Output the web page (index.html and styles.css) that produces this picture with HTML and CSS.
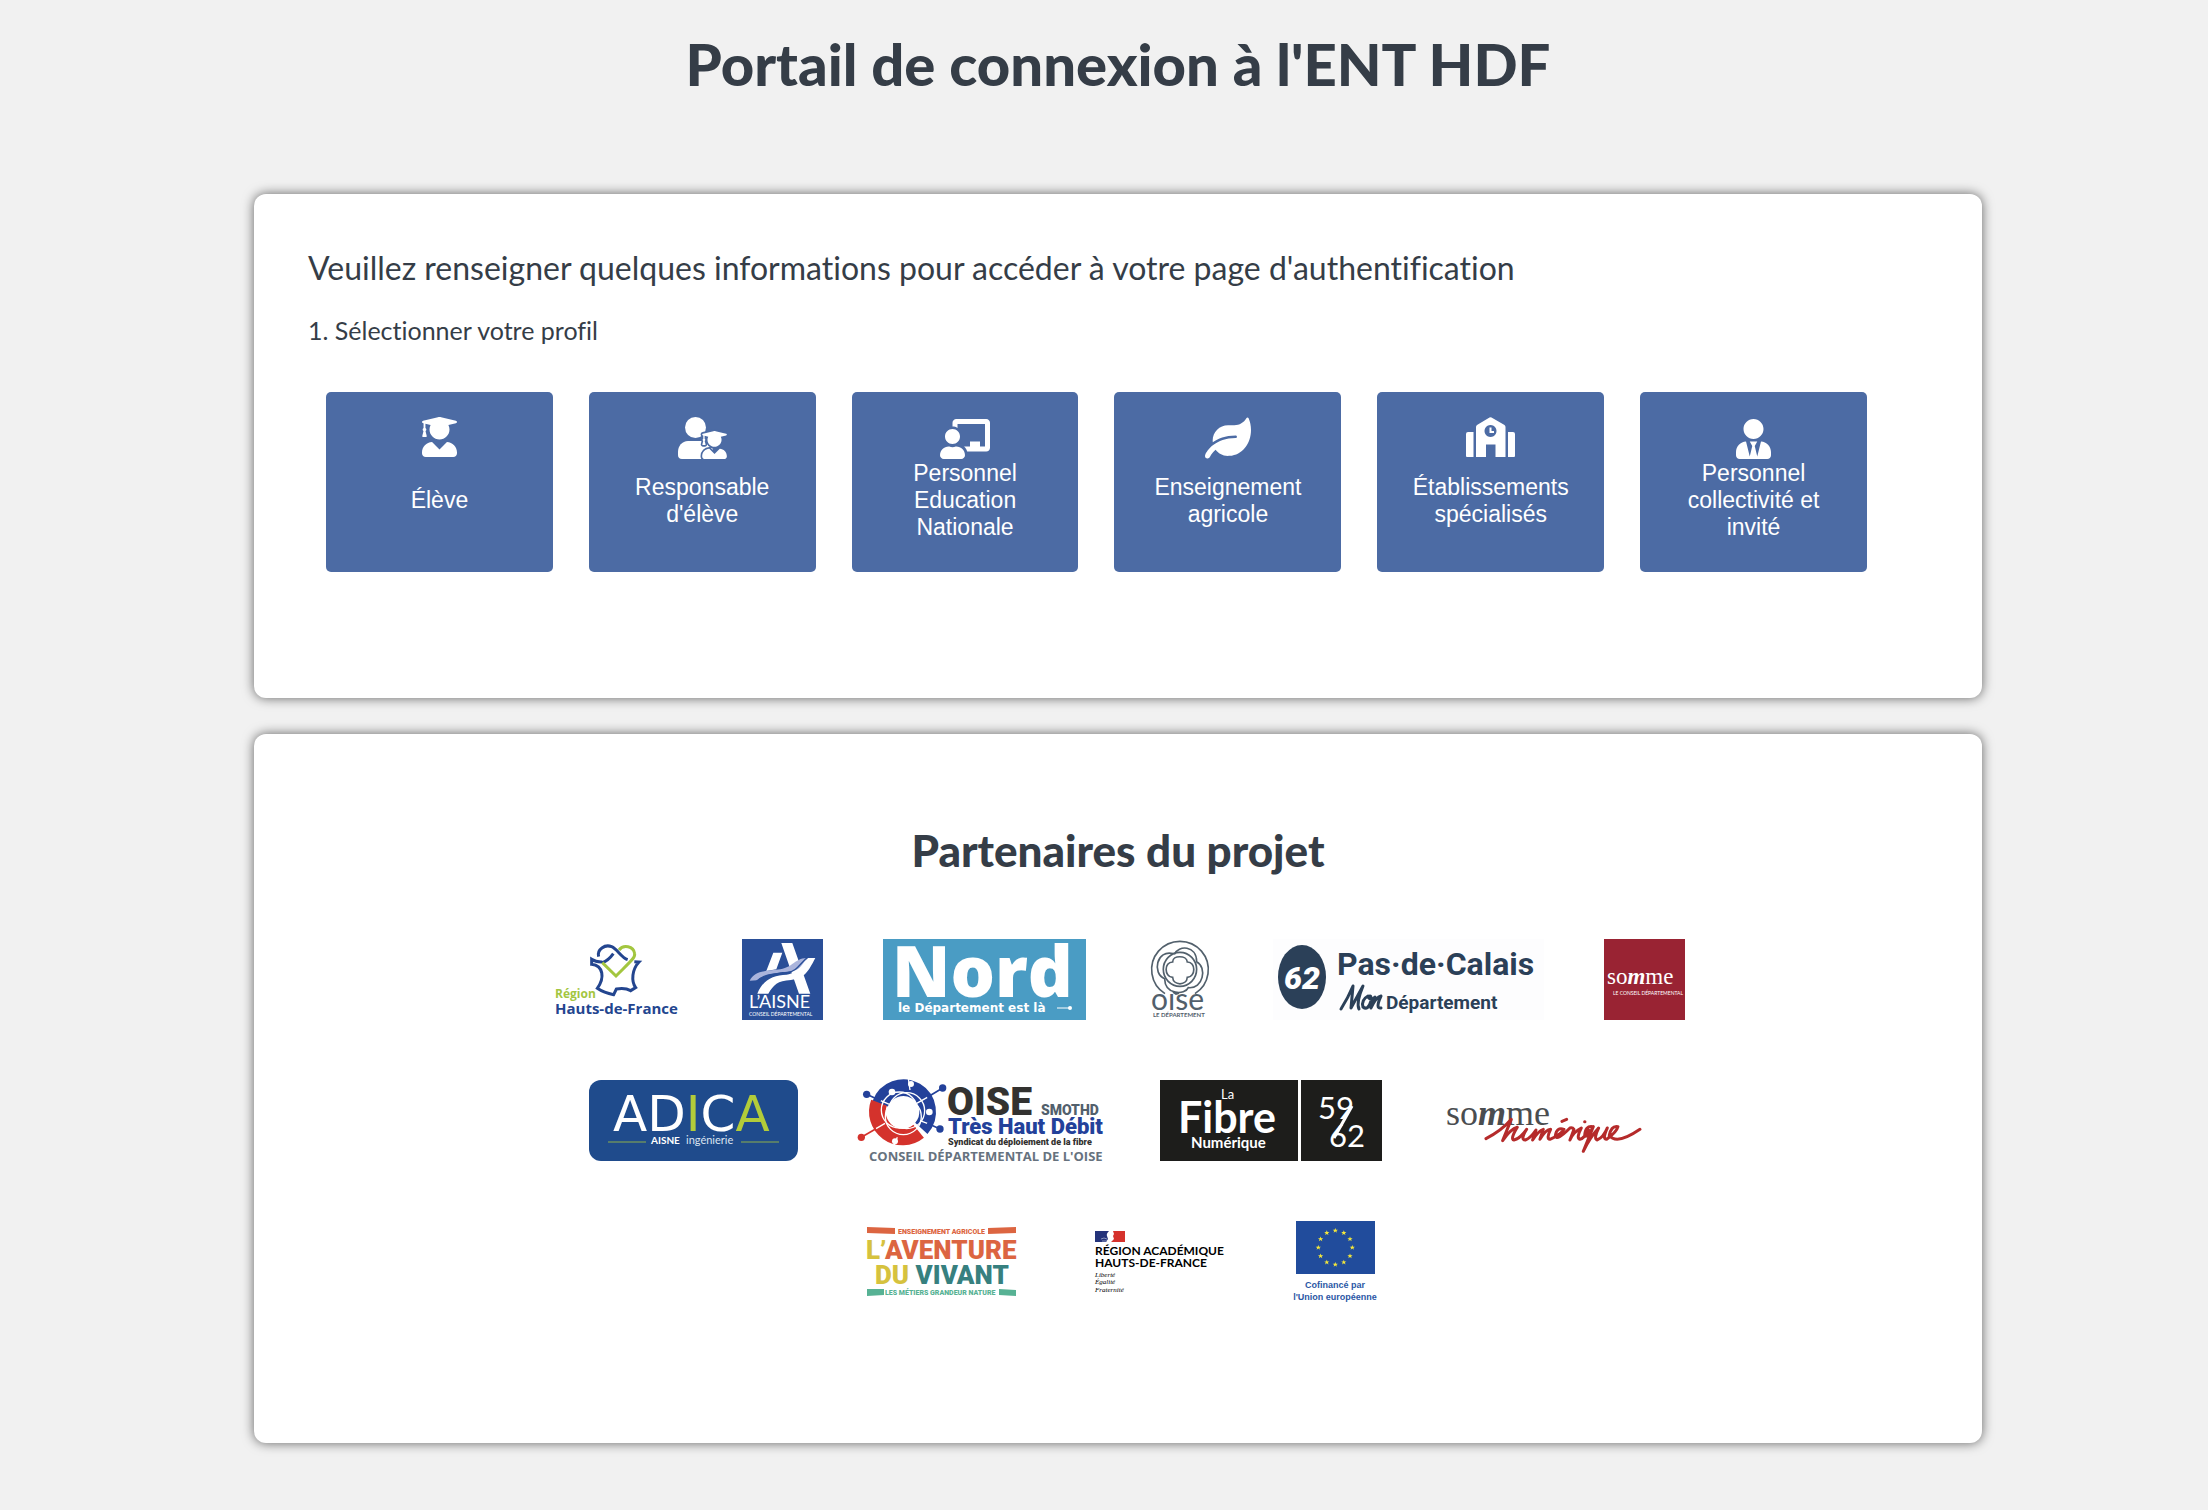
FILE: index.html
```html
<!DOCTYPE html>
<html lang="fr">
  <head>
    <meta charset="UTF-8" />
    <meta name="viewport" content="width=device-width, initial-scale=1.0" />
    <title>Portail de connexion à l'ENT HDF</title>
    <link rel="stylesheet" href="styles.css">
  </head>
  <body>
    <header>
      <h1>Portail de connexion à l'ENT HDF</h1>
    </header>
    <main>
      <section class="card">
        <h2 class="intro">Veuillez renseigner quelques informations pour accéder à votre page d'authentification</h2>
        <p class="etape">1. Sélectionner votre profil</p>
        <div class="profils">
          <button type="button">
            <svg width="35" height="40" viewBox="0 0 448 512"><path id="diplome" d="M319.400 320.600L224 416l-95.400-95.400C57.100 323.700 0 382.200 0 454.400v9.600c0 26.500 21.500 48 48 48h352c26.500 0 48-21.500 48-48v-9.600c0-72.200-57.100-130.700-128.600-133.800zM13.600 79.800l6.400 1.500v58.400c-7 4.200-12 11.500-12 20.300 0 8.400 4.600 15.400 11.100 19.700L3.500 242c-1.700 6.900 2.100 14 7.600 14h41.800c5.500 0 9.300-7.100 7.600-14l-15.600-62.300C51.400 175.400 56 168.400 56 160c0-8.800-5-16.100-12-20.300V87.100l66 15.900c-8.600 17.200-14 36.400-14 57 0 70.700 57.300 128 128 128s128-57.300 128-128c0-20.600-5.300-39.800-14-57l96.300-23.200c18.200-4.400 18.200-27.100 0-31.500l-190.400-46c-13-3.100-26.700-3.100-39.700 0L13.600 48.200c-18.100 4.400-18.100 27.200 0 31.600z"/></svg>
            <span>Élève</span>
          </button>
          <button type="button">
            <svg width="49" height="42" viewBox="0 0 49 42">
              <circle cx="17.500" cy="10.500" r="10.500"/>
              <path d="M10 24h15c5 0 10 5 10 11v7H4c-2.500 0-4-1.500-4-4v-3c0-6 4-11 10-11z"/>
              <g transform="translate(24.200 14) scale(.055)">
                <use href="#diplome" class="contour"/>
                <use href="#diplome"/>
              </g>
            </svg>
            <span>Responsable d'élève</span>
          </button>
          <button type="button" class="long">
            <svg width="50" height="40" viewBox="0 0 640 512"><path d="M208 352c-2.390 0-4.780.35-7.060 1.090C187.980 357.300 174.350 360 160 360c-14.350 0-27.980-2.700-40.950-6.910-2.280-.74-4.660-1.090-7.050-1.090C49.940 352-.33 402.480 0 464.620.14 490.880 21.730 512 48 512h224c26.270 0 47.860-21.120 48-47.380.33-62.140-49.940-112.620-112-112.620zm-48-32c53.020 0 96-42.980 96-96s-42.980-96-96-96-96 42.980-96 96 42.980 96 96 96zM592 0H208c-26.470 0-48 22.250-48 49.590V96c23.420 0 45.100 6.780 64 17.800V64h352v288h-64v-64H384v64h-76.240c19.100 16.690 33.120 38.730 39.690 64H592c26.470 0 48-22.250 48-49.590V49.590C640 22.250 618.470 0 592 0z"/></svg>
            <span>Personnel Education Nationale</span>
          </button>
          <button type="button">
            <svg width="46" height="42" viewBox="0 0 576 512"><path d="M546.200 9.700c-5.600-12.500-21.600-13-28.300-1.200C486.900 62.400 431.400 96 368 96h-80C182 96 96 182 96 288c0 7 .8 13.700 1.500 20.500C161.300 262.800 253.400 224 384 224c8.800 0 16 7.200 16 16s-7.200 16-16 16C132.600 256 26 410.100 2.400 468c-6.600 16.300 1.200 34.900 17.500 41.600 16.400 6.800 35-1.100 41.800-17.300 1.500-3.600 20.900-47.900 71.900-90.600 32.400 43.900 94 85.800 174.900 77.200C465.500 467.500 576 326.700 576 154.300c0-50.200-10.800-102.200-29.800-144.600z"/></svg>
            <span>Enseignement agricole</span>
          </button>
          <button type="button">
            <svg width="49" height="40" viewBox="0 0 49 40">
              <path fill-rule="evenodd" d="M10 40V10q0-1 1-2L23.500.5q1-.6 2 0L38.500 8q1 1 1 2v30h-10V27.500h-9.500V40zM24.500 8a6 6 0 1 0 .01 0z"/>
              <path d="M7.500 15v25H1q-1 0-1-1V17q0-2 2-2zM42 15v25h6q1 0 1-1V17q0-2-2-2zM23.500 10.500h2V14h2.500v2h-4.500z"/>
            </svg>
            <span>Établissements spécialisés</span>
          </button>
          <button type="button" class="long">
            <svg width="35" height="40" viewBox="0 0 448 512"><path d="M224 256c70.700 0 128-57.300 128-128S294.700 0 224 0 96 57.300 96 128s57.300 128 128 128zm95.800 32.600L272 480l-32-136 32-56h-96l32 56-32 136-47.800-191.400C56.900 292 0 350.300 0 422.400V464c0 26.500 21.500 48 48 48h352c26.500 0 48-21.500 48-48v-41.600c0-72.100-56.900-130.400-128.200-133.800z"/></svg>
            <span>Personnel collectivité et invité</span>
          </button>
        </div>
      </section>

      <section class="card partenaires">
        <h2>Partenaires du projet</h2>
        <div class="logos">
          <!-- Région Hauts-de-France -->
          <svg width="131" height="81" class="open">
            <g transform="translate(-11 -19) scale(.3333)" fill="none" stroke-width="9">
              <path stroke="#23458f" d="M187 128Q205 122 220 101M176 110C170 88 195 72 215 80C232 87 243 112 263 119M187 126Q168 127 155 118V133C190 138 195 172 172 205Q192 219 221 224L229 207Q255 202 272 212L287 203C273 184 276 148 297 126L283 125"/>
              <path stroke="#a3c63f" d="M237 90C250 72 281 78 284 101C286 113 272 124 228 168L187 128"/>
            </g>
            <text x="4" y="59" font-size="12" fill="#a3c63f">Région</text>
            <text x="4" y="75" font-size="15" fill="#23458f">Hauts-de-France</text>
          </svg>
          <!-- Aisne -->
          <svg width="81" height="81" class="lato">
            <rect width="81" height="81" fill="#2a4f98"/>
            <g transform="translate(-203 -19) scale(.3333)" fill="#fff">
              <path d="M727 69H760L814 221H780ZM703 98H730L712 148L682 153Z"/>
              <path fill="#aab4dc" d="M632 182C650 148 690 154 724 148C765 140 765 116 803 114C786 160 755 152 718 158C680 164 660 174 655 181Z"/>
              <path d="M655 221C675 175 704 167 743 164C784 158 789 127 807 114H829C807 156 798 174 756 180C715 182 704 195 688 221Z"/>
              <path fill="none" stroke="#2a4f98" stroke-width="4" d="M650 186C675 160 710 162 742 159C776 154 783 130 806 112"/>
            </g>
            <text x="7" y="69" font-size="18" fill="#fff">L’AISNE</text>
            <text x="7" y="77" font-size="5" fill="#fff">CONSEIL DÉPARTEMENTAL</text>
          </svg>
          <!-- Nord -->
          <svg width="203" height="81">
            <rect width="203" height="81" fill="#4a9cc4"/>
            <text x="9" y="58" font-size="70" fill="#fff" class="open extra">Nord</text>
            <text x="15" y="73" font-size="12" fill="#fff" class="dejavu">le Département est là</text>
            <path d="M174 69h13" stroke="#fff"/><circle cx="187" cy="69" r="2" fill="#fff"/>
          </svg>
          <!-- Oise -->
          <svg width="67" height="81" class="lato">
            <g transform="translate(-286 -19) scale(.3333)" fill="none" stroke="#52606c" stroke-width="5">
              <path d="M915 221A85 85 0 1 1 1005 221"/>
              <path d="M943 103C955 75 1010 75 1010 125C1042 142 1030 208 985 203C975 226 915 225 914 176C875 160 890 87 940 101"/>
              <ellipse cx="960" cy="148" rx="50" ry="51"/>
              <path d="M938 126C938 105 980 105 982 126C1008 125 1008 171 982 172C980 198 940 198 938 172C912 170 912 126 938 126Z"/>
            </g>
            <text x="5" y="71" font-size="30" fill="#52606c">oıse</text>
            <path d="M27 53l3 2 3-1" fill="none" stroke="#52606c" stroke-width="2"/>
            <text x="7" y="78" font-size="6" fill="#52606c" class="gras">LE DÉPARTEMENT</text>
          </svg>
          <!-- Pas-de-Calais -->
          <svg width="271" height="81" class="roboto">
            <rect width="271" height="81" fill="#fdfdfe"/>
            <ellipse cx="29" cy="38" rx="24" ry="32" fill="#2b4058"/>
            <text x="11" y="50" font-size="32" fill="#fff" font-style="italic">62</text>
            <text x="64" y="36" font-size="32" fill="#2b4058" class="gras">Pas·de·Calais</text>
            <path fill="none" stroke="#2b4058" stroke-width="3" stroke-linecap="round" stroke-linejoin="round" d="M68 70Q75 59 80 47L78 69Q84 58 90 47Q83 64 86 70M95 57Q88 61 90 68Q95 72 98 62Q99 55 95 58Q98 62 102 58L98 69Q103 58 108 57Q102 70 108 69"/>
            <text x="113" y="70" font-size="19" fill="#2b4058" class="gras">Département</text>
          </svg>
          <!-- Somme -->
          <svg width="81" height="81">
            <rect width="81" height="81" fill="#992333"/>
            <text x="3" y="45" font-size="23" fill="#fff" class="serif">so<tspan class="gras" font-style="italic">m</tspan>me</text>
            <text x="79" y="56" font-size="5" fill="#fff" text-anchor="end" class="lato">LE CONSEIL DÉPARTEMENTAL</text>
          </svg>
          <!-- ADICA -->
          <svg width="209" height="81" class="lato">
            <rect width="209" height="81" rx="12" fill="#1f4b8c"/>
            <text x="24" y="51" font-size="50" fill="#fff" class="dejavu fin">AD<tspan fill="#b2cc3a">I</tspan>C<tspan fill="#b2cc3a">A</tspan></text>
            <path d="M19 62h38M152 62h38" stroke="#8fb04a"/>
            <text x="62" y="64" font-size="10" fill="#fff" class="gras">AISNE</text>
            <text x="97" y="64" font-size="11" fill="#dbe4f0">ingénierie</text>
          </svg>
          <!-- Oise très haut débit -->
          <svg width="242" height="81" class="roboto">
            <g transform="translate(-18 -20) scale(.3333)" fill="none">
              <path stroke="#23419a" stroke-width="50" d="M121 132A73 73 0 1 1 244 205"/>
              <path stroke="#d4322c" stroke-width="50" d="M117 128A76 76 0 0 0 236 214"/>
              <g stroke="#fff" stroke-width="4">
                <circle cx="178" cy="150" r="54"/>
                <circle cx="200" cy="152" r="54"/>
                <circle cx="190" cy="170" r="54"/>
                <path d="M205 55L210 90M160 262L172 232M122 122L150 134M262 190L240 182M230 130L262 112M108 206L135 190"/>
              </g>
              <path stroke="#23419a" stroke-width="5" d="M80 103L122 122M308 84L262 112M300 207L262 190"/>
              <path stroke="#d4322c" stroke-width="5" d="M64 232L108 206"/>
              <circle cx="188" cy="160" r="46" fill="#fff"/>
              <g fill="#23419a"><circle cx="80" cy="103" r="11"/><circle cx="308" cy="84" r="11"/><circle cx="300" cy="207" r="11"/></g>
              <circle cx="64" cy="232" r="11" fill="#d4322c"/>
              <g fill="#fff"><circle cx="156" cy="96" r="10"/><circle cx="268" cy="156" r="10"/><circle cx="165" cy="244" r="9"/><circle cx="213" cy="72" r="9"/></g>
            </g>
            <text x="89" y="35" font-size="39" fill="#333230">OISE</text>
            <text x="183" y="35" font-size="14" fill="#52606c">SMOTHD</text>
            <text x="90" y="54" font-size="22" fill="#23419a">Très Haut Débit</text>
            <text x="90" y="65" font-size="9" fill="#333230">Syndicat du déploiement de la fibre</text>
            <text x="11" y="81" font-size="13" fill="#66727e" class="open">CONSEIL DÉPARTEMENTAL DE L'OISE</text>
          </svg>
          <!-- La Fibre Numérique -->
          <svg width="222" height="81" class="lato" fill="#fff">
            <path d="M0 0h138v81H0zM141 0h81v81h-81z" fill="#1d1d1b"/>
            <text x="61" y="19" font-size="13">La</text>
            <text x="18" y="53" font-size="43" class="gras">Fibre</text>
            <text x="31" y="68" font-size="15" class="gras">Numérique</text>
            <text x="158" y="39" font-size="31">59</text>
            <text x="169" y="67" font-size="31">62</text>
            <path d="M192 26l-18 32" stroke="#fff" stroke-width="3"/>
          </svg>
          <!-- Somme Numérique -->
          <svg width="205" height="81" class="serif">
            <text x="4" y="45" font-size="36" fill="#4a4d50">so<tspan class="gras" font-style="italic">m</tspan>me</text>
            <g transform="translate(-302 -20) scale(.3333)" fill="none" stroke="#b52b2b" stroke-width="9" stroke-linecap="round" stroke-linejoin="round">
              <path d="M1038 236Q1085 212 1114 178L1088 242Q1112 207 1132 202Q1110 238 1122 240Q1140 236 1160 208Q1140 240 1156 240Q1172 234 1188 210L1178 240Q1196 212 1210 208L1200 238Q1218 208 1232 208Q1218 236 1230 238Q1262 225 1272 208Q1250 200 1246 228Q1250 244 1290 204Q1298 202 1302 208L1290 240Q1300 216 1324 204Q1308 234 1320 238Q1332 236 1346 210M1358 200Q1336 196 1334 228Q1344 234 1360 200L1330 274Q1350 232 1376 204Q1360 236 1372 240Q1390 232 1402 204Q1386 238 1400 238Q1430 216 1434 200Q1414 196 1408 226Q1430 256 1500 208M1266 184l14-6M1334 185h1"/>
            </g>
          </svg>
          <!-- L'aventure du vivant -->
          <svg width="164" height="81" class="roboto">
            <path fill="#dc6541" d="M11 6l28 1v6l-28-1zM132 7l28-1v6l-28 1z"/>
            <path fill="#57b294" d="M11 68l17 0v6l-17 1zM143 68l17 1v6l-17-1z"/>
            <text x="42" y="13" font-size="7" fill="#dc6541">ENSEIGNEMENT AGRICOLE</text>
            <text x="10" y="38" font-size="26" fill="#dc6541"><tspan fill="#d6c23e">L’</tspan>AVENTURE</text>
            <text x="19" y="63" font-size="26" fill="#37807f"><tspan fill="#d6c23e">DU</tspan> VIVANT</text>
            <text x="29" y="74" font-size="7" fill="#57b294">LES MÉTIERS GRANDEUR NATURE</text>
          </svg>
          <!-- Région académique -->
          <svg width="149" height="81" class="lato">
            <path fill="#24337a" d="M15 10h14q-3 3-2 5l1 3-2 3H15z"/>
            <path fill="#d5322c" d="M33 10h12v11H31l3-3-1-3 1-2z"/>
            <path fill="none" stroke="#8993bd" d="M21 18l3-1 3 1M22 20h5"/>
            <text x="15" y="34" font-size="12" class="gras">RÉGION ACADÉMIQUE</text>
            <text x="15" y="46" font-size="12" class="gras">HAUTS-DE-FRANCE</text>
            <g class="serif" font-size="7" font-style="italic">
              <text x="15" y="56">Liberté</text>
              <text x="15" y="63">Égalité</text>
              <text x="15" y="71">Fraternité</text>
            </g>
          </svg>
          <!-- Union européenne -->
          <svg width="91" height="81" fill="#2b57a5">
            <rect x="7" y="0" width="79" height="53" fill="#214c9c"/>
            <g fill="#f5e83a">
              <path id="etoile" d="M46.300 7l.7 1.700h1.900l-1.500 1.200.6 1.900-1.700-1.200-1.700 1.200.6-1.900-1.500-1.200h1.900z"/>
              <use href="#etoile" x="8.500" y="2.300"/>
              <use href="#etoile" x="14.700" y="8.500"/>
              <use href="#etoile" x="17" y="17"/>
              <use href="#etoile" x="14.700" y="25.500"/>
              <use href="#etoile" x="8.500" y="31.700"/>
              <use href="#etoile" y="34"/>
              <use href="#etoile" x="-8.500" y="31.700"/>
              <use href="#etoile" x="-14.700" y="25.500"/>
              <use href="#etoile" x="-17" y="17"/>
              <use href="#etoile" x="-14.700" y="8.500"/>
              <use href="#etoile" x="-8.500" y="2.300"/>
            </g>
            <g class="arial" font-size="9" text-anchor="middle">
              <text x="46" y="67">Cofinancé par</text>
              <text x="46" y="79">l'Union européenne</text>
            </g>
          </svg>
        </div>
      </section>
    </main>
  </body>
</html>
```
FILE: styles.css
```css
body {
  margin: 0;
  padding: 0 0 68px 28px;
  background-color: #f1f1f1;
  color: #353d47;
  font-family: Lato, sans-serif;
  font-variant-ligatures: none;
}
h1,
h2,
p {
  margin: 0;
}
h1 {
  padding: 28px 0 94px;
  font-family: "Lato Black", Lato, sans-serif;
  font-size: 58px;
  font-weight: 900;
  line-height: 72px;
  text-align: center;
}
main {
  display: flex;
  flex-direction: column;
  gap: 36px;
  max-width: 1728px;
  margin: 0 auto;
}
.card {
  padding: 54px 54px 126px;
  border-radius: 12px;
  background-color: white;
  box-shadow: 0 0 12px rgba(0, 0, 0, 0.6);
}
.intro {
  font-size: 32px;
  font-weight: 400;
  line-height: 40px;
}
.etape {
  margin-top: 27px;
  font-size: 25px;
  line-height: 30px;
}

/* choix du profil */
.profils {
  display: grid;
  grid-template-columns: repeat(6, 1fr);
  gap: 36px;
  margin: 47px 61px 0 18px;
}
.profils button {
  display: flex;
  flex-direction: column;
  align-items: center;
  min-height: 180px;
  padding: 25px 24px;
  border: none;
  border-radius: 5px;
  background-color: #4c6ba4;
  color: white;
  font-family: "Liberation Sans", Arial, sans-serif;
  font-size: 23px;
  line-height: 27px;
  cursor: pointer;
}
.profils svg {
  flex: none;
  margin-bottom: auto;
  fill: white;
}
.profils .long svg {
  margin-top: 2px;
}
.profils span {
  display: flex;
  align-items: center;
  min-height: 81px;
  margin-bottom: 6px;
}
.contour {
  stroke: #4c6ba4;
  stroke-width: 60px;
}

/* partenaires */
.partenaires {
  padding: 90px 54px 141px;
}
.partenaires h2 {
  font-family: "Lato Black", Lato, sans-serif;
  font-size: 44px;
  font-weight: 900;
  line-height: 52px;
  text-align: center;
}
.logos {
  display: flex;
  flex-wrap: wrap;
  justify-content: center;
  gap: 60px;
  max-width: 1200px;
  margin: 63px auto 0;
}
.logos svg {
  overflow: visible;
}
.open {
  font-family: "Open Sans", sans-serif;
  font-weight: 700;
}
.extra {
  font-weight: 800;
}
.lato {
  font-family: Lato, sans-serif;
}
.dejavu {
  font-family: "DejaVu Sans", sans-serif;
  font-weight: 700;
}
.fin {
  font-weight: 400;
}
.roboto {
  font-family: Roboto, sans-serif;
  font-weight: 900;
}
.serif {
  font-family: "Liberation Serif", serif;
}
.arial {
  font-family: "Liberation Sans", sans-serif;
  font-weight: 700;
}
.gras {
  font-weight: 700;
}
@media screen and (max-width: 1200px) {
  .profils {
    grid-template-columns: repeat(3, 1fr);
  }
}
```
